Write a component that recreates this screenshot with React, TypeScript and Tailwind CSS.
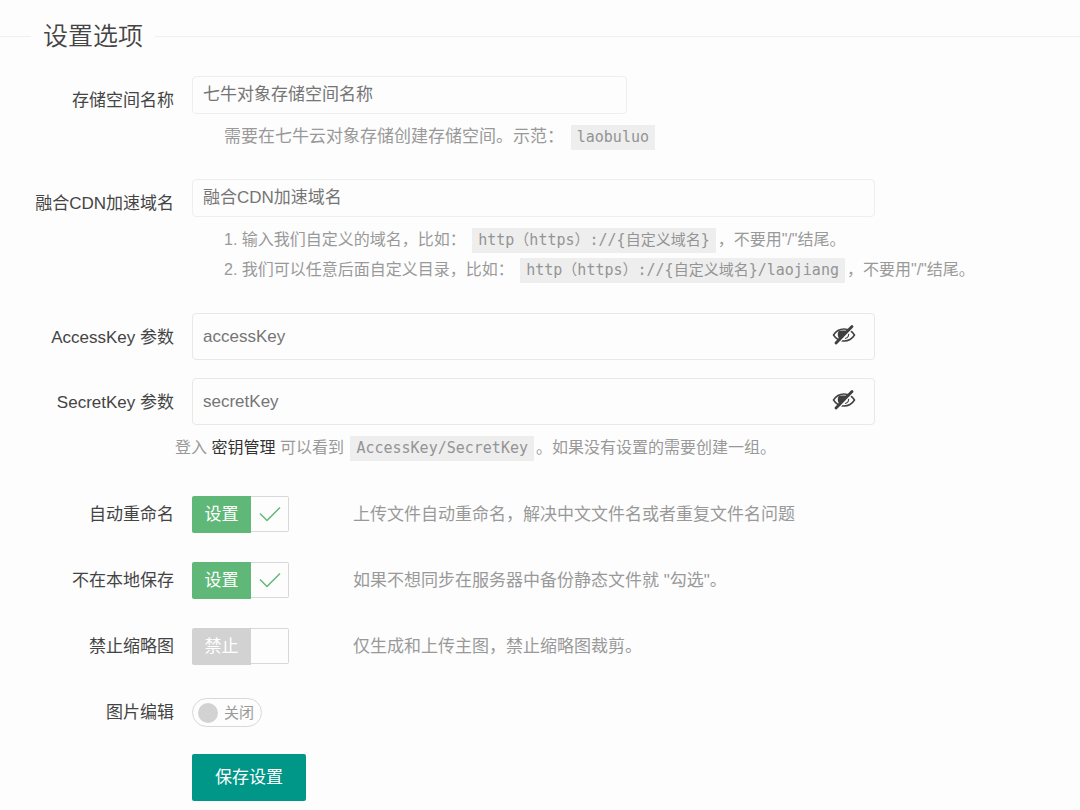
import React, { useState } from 'react';

interface RowProps {
  label: string;
  htmlFor: string;
  labelClass?: string;
  children: React.ReactNode;
}

function Row({ label, htmlFor, labelClass = 'h-[49px]', children }: RowProps) {
  return (
    <div className="flex items-start gap-[18px]">
      <label
        htmlFor={htmlFor}
        className={`flex w-[174px] shrink-0 items-center justify-end whitespace-nowrap text-[#444] ${labelClass}`}
      >
        {label}
      </label>
      <div className="min-w-0 flex-1">{children}</div>
    </div>
  );
}

function Code({ children }: { children: React.ReactNode }) {
  return (
    <code className="mx-0.5 inline-block h-[25px] bg-[#eeeeee] px-1.5 font-['DejaVu_Sans_Mono','Noto_Sans_CJK_SC',monospace] text-[15px] leading-[25px] text-[#949494]">
      {children}
    </code>
  );
}

function EyeSlashIcon() {
  return (
    <svg width="24" height="22" viewBox="0 0 24 22" fill="none">
      <path d="M1.500 11C4 7 8 5 12 5s8 2 10.500 6C20 15 16 17 12 17S4 15 1.500 11z" stroke="#3f3f3f" strokeWidth="1.500" />
      <path d="M7 6.500h9L7.500 15C5 12 5.500 9 7 6.500z" fill="#3f3f3f" />
      <path d="M16.500 9.500c.6 2.500-.8 4.500-3.500 5" stroke="#3f3f3f" strokeWidth="1.200" />
      <path d="M5.500 20.500L21.500 3.500" stroke="#fdfdfd" strokeWidth="1.500" />
      <path d="M4 19L20 2.500" stroke="#3f3f3f" strokeWidth="2.800" strokeLinecap="round" />
    </svg>
  );
}

function SecretInput({ id, placeholder }: { id: string; placeholder: string }) {
  const [visible, setVisible] = useState(false);

  return (
    <div className="flex h-[47px] w-full max-w-[683px] items-center rounded border border-[#e8e8e8] pr-[18px]">
      <input
        id={id}
        type={visible ? 'text' : 'password'}
        placeholder={placeholder}
        className="h-full min-w-0 flex-1 bg-transparent px-[10px] outline-none placeholder:text-[#757575]"
      />
      <button type="button" aria-label="显示或隐藏" onClick={() => setVisible(!visible)} className="pb-1">
        <EyeSlashIcon />
      </button>
    </div>
  );
}

interface CheckProps {
  id: string;
  text: string;
  hint: string;
  defaultChecked?: boolean;
}

function Check({ id, text, hint, defaultChecked = false }: CheckProps) {
  const [checked, setChecked] = useState(defaultChecked);

  return (
    <div className="flex items-center gap-16">
      <label htmlFor={id} className="relative flex h-[37px] w-[97px] shrink-0 cursor-pointer">
        <input
          id={id}
          type="checkbox"
          checked={checked}
          onChange={() => setChecked(!checked)}
          className="sr-only"
        />
        <span
          className={`flex w-[59px] items-center justify-center rounded-l-xs text-white ${
            checked ? 'bg-[#5fb878]' : 'bg-[#d2d2d2]'
          }`}
        >
          {text}
        </span>
        <span className="flex h-9 flex-1 items-center justify-center rounded-r-xs border border-l-0 border-[#d8d8d8]">
          {checked && (
            <svg width="22" height="16" viewBox="0 0 22 16" fill="none" stroke="#5fb878" strokeWidth="1.500">
              <path d="M1 7.500L8 14.500L21 1.500" />
            </svg>
          )}
        </span>
      </label>
      <span className="text-[#999]">{hint}</span>
    </div>
  );
}

function Switch({ id }: { id: string }) {
  const [on, setOn] = useState(false);

  return (
    <label
      htmlFor={id}
      className={`relative flex h-[29px] w-[70px] cursor-pointer items-center gap-[6px] rounded-full border px-[5px] text-[15px] ${
        on ? 'flex-row-reverse border-[#5fb878] bg-[#5fb878] text-white' : 'border-[#d8d8d8] text-[#999]'
      }`}
    >
      <input id={id} type="checkbox" role="switch" checked={on} onChange={() => setOn(!on)} className="sr-only" />
      <span className={`size-5 shrink-0 rounded-full ${on ? 'bg-white' : 'bg-[#d2d2d2]'}`} />
      <span className="whitespace-nowrap">{on ? '开启' : '关闭'}</span>
    </label>
  );
}

const inputClass =
  'block h-[38px] w-full rounded border border-[#eeeeee] bg-transparent px-[10px] outline-none placeholder:text-[#757575]';

export default function App() {
  return (
    <form
      onSubmit={(e) => e.preventDefault()}
      className="min-h-screen bg-[#fdfdfd] pt-[18px] font-['Liberation_Sans','Noto_Sans_CJK_SC',sans-serif] text-[17px] leading-[30px]"
    >
      <fieldset className="border-t border-[#f0f0f0]">
        <legend className="ml-[31px] px-3 text-[25px] leading-[37px] font-[350] text-[#444]">设置选项</legend>

        <div className="pt-[21px]">
          <Row label="存储空间名称" htmlFor="bucket">
            <div className="max-w-[435px]">
              <input id="bucket" type="text" placeholder="七牛对象存储空间名称" className={inputClass} />
            </div>
            <p className="mt-2 pl-8 text-[#999]">
              需要在七牛云对象存储创建存储空间。示范： <Code>laobuluo</Code>
            </p>
          </Row>
        </div>

        <div className="pt-[27px]">
          <Row label="融合CDN加速域名" htmlFor="domain">
            <div className="max-w-[683px]">
              <input id="domain" type="text" placeholder="融合CDN加速域名" className={inputClass} />
            </div>
            <div className="mt-2 pl-8 text-base leading-[30px] text-[#999]">
              <p>
                1. 输入我们自定义的域名，比如： <Code>{'http（https）://{自定义域名}'}</Code>，不要用"/"结尾。
              </p>
              <p>
                2. 我们可以任意后面自定义目录，比如： <Code>{'http（https）://{自定义域名}/laojiang'}</Code>，不要用"/"结尾。
              </p>
            </div>
          </Row>
        </div>

        <div className="flex flex-col gap-4 pt-7">
          <Row label="AccessKey 参数" htmlFor="accessKey">
            <SecretInput id="accessKey" placeholder="accessKey" />
          </Row>
          <Row label="SecretKey 参数" htmlFor="secretKey">
            <SecretInput id="secretKey" placeholder="secretKey" />
          </Row>
        </div>
        <p className="mt-1.5 pl-[175px] text-base leading-[30px] text-[#999]">
          登入{' '}
          <a href="#keys" className="text-[#333]">
            密钥管理
          </a>{' '}
          可以看到 <Code>AccessKey/SecretKey</Code>。如果没有设置的需要创建一组。
        </p>

        <div className="flex flex-col gap-[29px] pt-[33px]">
          <Row label="自动重命名" htmlFor="rename" labelClass="h-[37px]">
            <Check id="rename" text="设置" hint="上传文件自动重命名，解决中文文件名或者重复文件名问题" defaultChecked />
          </Row>
          <Row label="不在本地保存" htmlFor="nolocal" labelClass="h-[37px]">
            <Check id="nolocal" text="设置" hint={'如果不想同步在服务器中备份静态文件就 "勾选"。'} defaultChecked />
          </Row>
          <Row label="禁止缩略图" htmlFor="nothumb" labelClass="h-[37px]">
            <Check id="nothumb" text="禁止" hint="仅生成和上传主图，禁止缩略图裁剪。" />
          </Row>
        </div>

        <div className="pt-[33px]">
          <Row label="图片编辑" htmlFor="edit" labelClass="h-[29px]">
            <Switch id="edit" />
          </Row>
        </div>

        <div className="pt-[27px] pl-48">
          <button type="submit" className="h-[47px] w-[114px] rounded-xs bg-[#009688] text-white">
            保存设置
          </button>
        </div>
      </fieldset>
    </form>
  );
}
